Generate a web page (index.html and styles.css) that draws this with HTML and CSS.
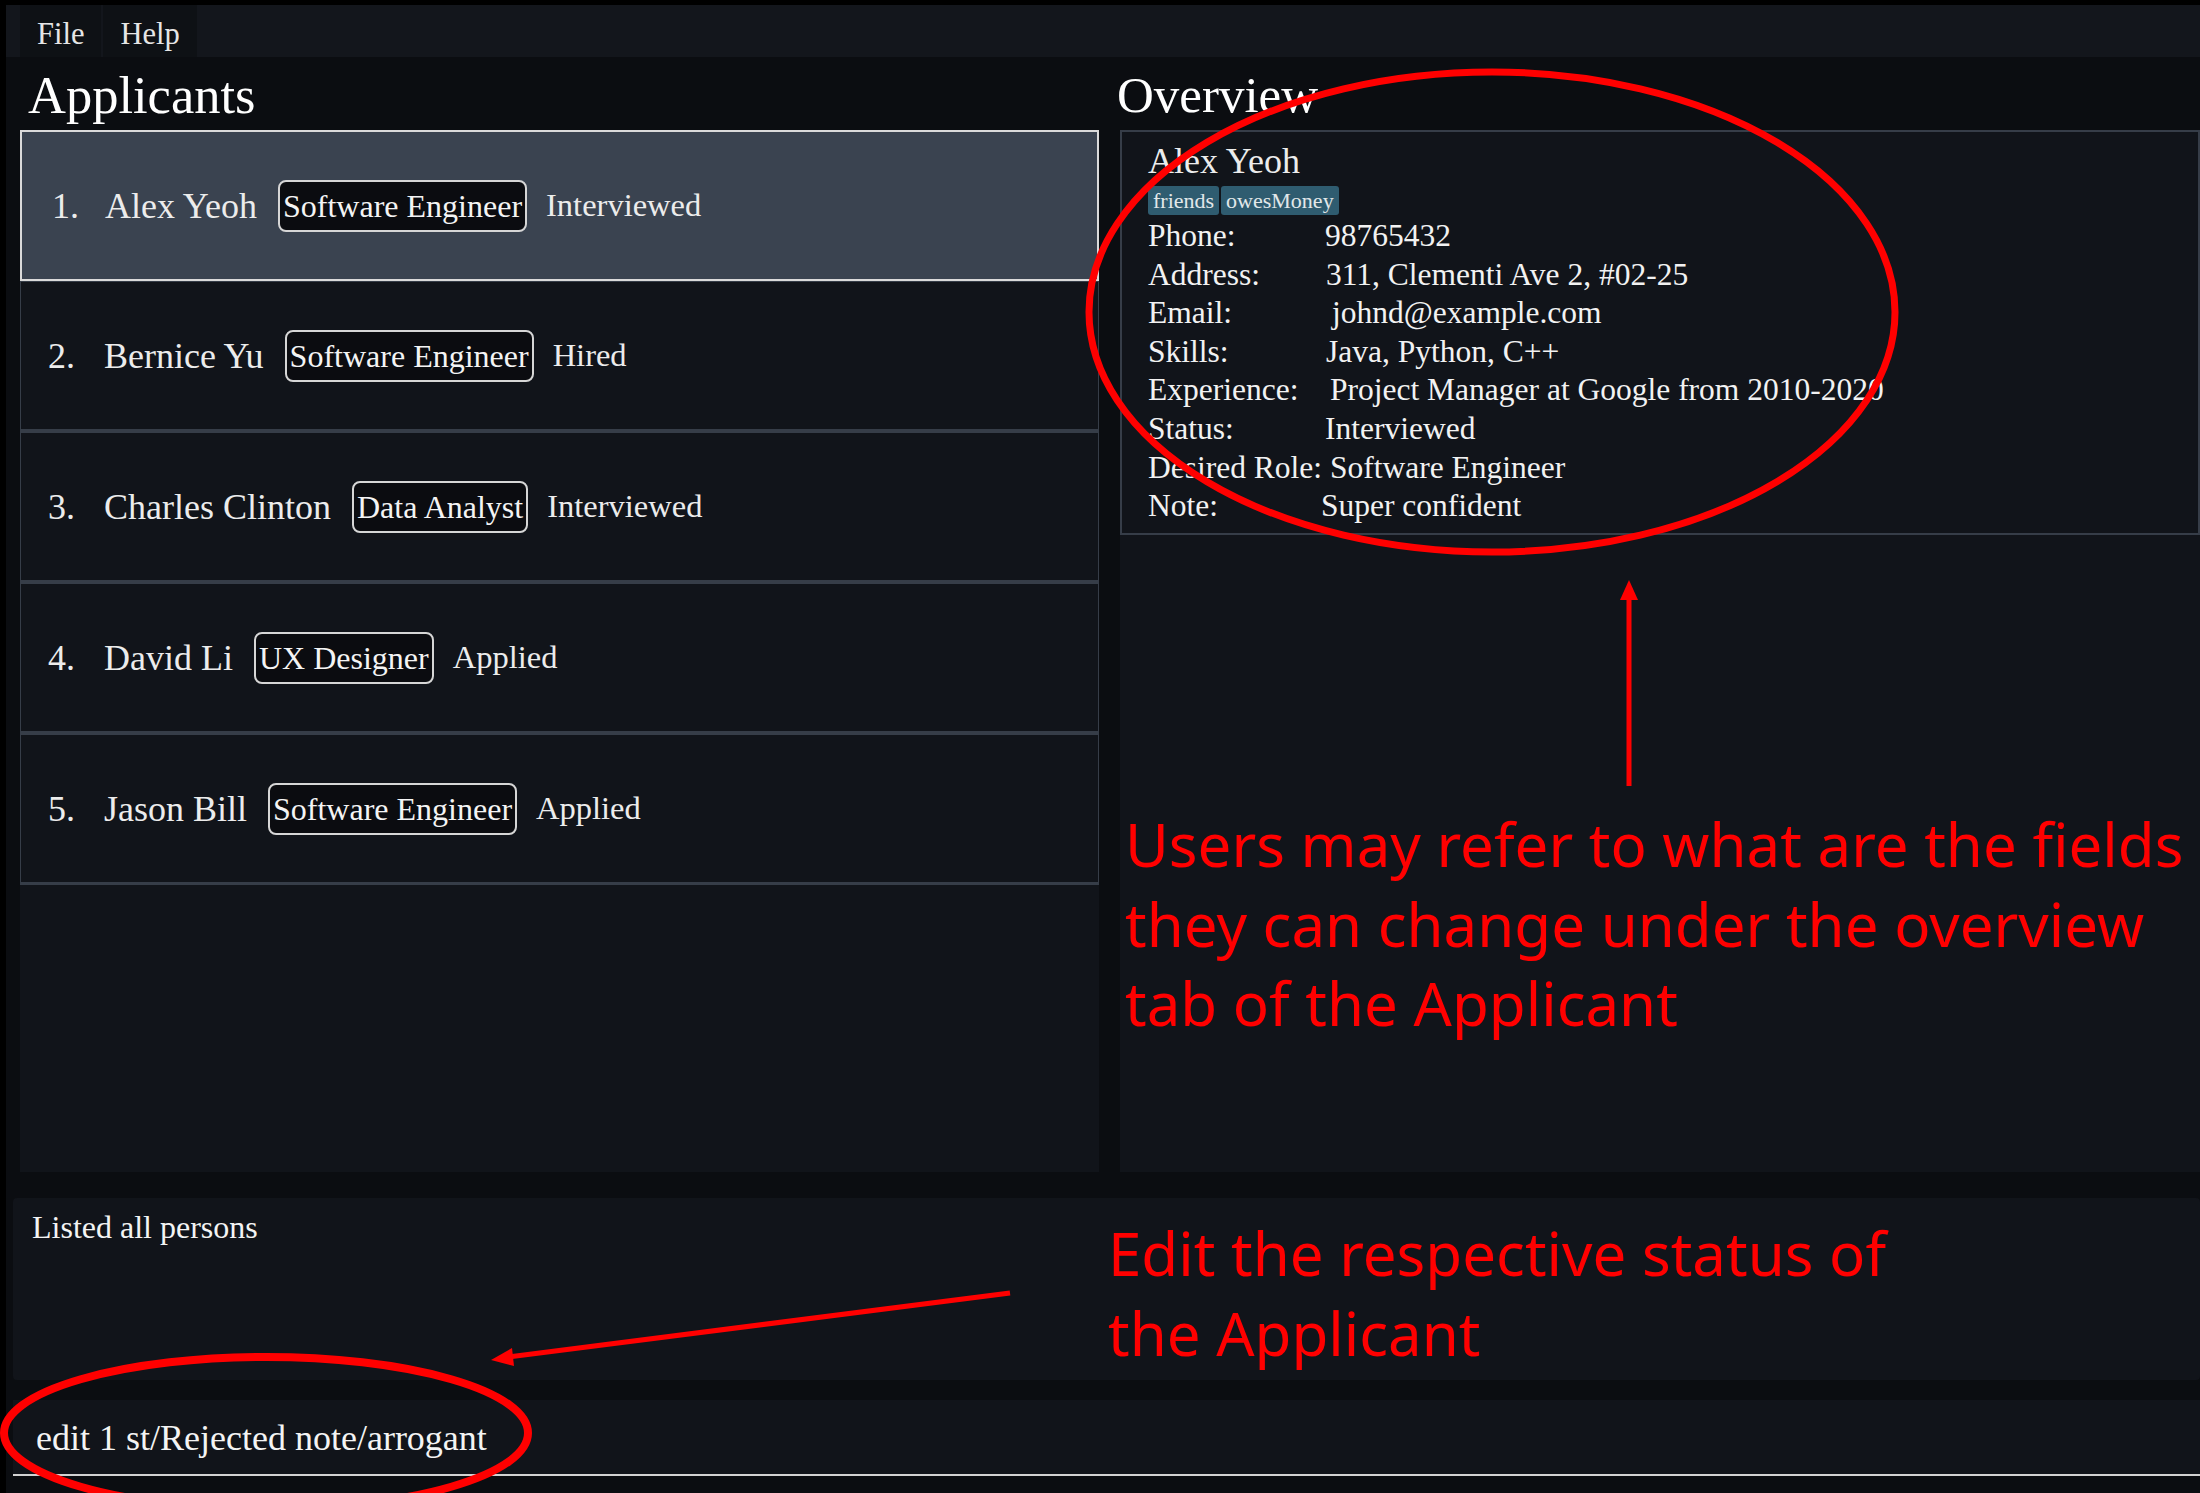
FILE: index.html
```html
<!DOCTYPE html>
<html lang="en">
<head>
<meta charset="utf-8">
<title>Applicants</title>
<link rel="stylesheet" href="styles.css">
</head>
<body>
<div class="app">
  <nav class="menubar">
    <span class="menu-item">File</span>
    <span class="menu-item">Help</span>
  </nav>
  <main class="main">
    <section class="col col-left">
      <h1 class="heading heading--applicants">Applicants</h1>
      <div class="list-panel">
        <div class="card card--selected">
          <span class="card-index">1.</span>
          <span class="card-name">Alex Yeoh</span>
          <span class="role-tag">Software Engineer</span>
          <span class="card-status">Interviewed</span>
        </div>
        <div class="card">
          <span class="card-index">2.</span>
          <span class="card-name">Bernice Yu</span>
          <span class="role-tag">Software Engineer</span>
          <span class="card-status">Hired</span>
        </div>
        <div class="card">
          <span class="card-index">3.</span>
          <span class="card-name">Charles Clinton</span>
          <span class="role-tag">Data Analyst</span>
          <span class="card-status">Interviewed</span>
        </div>
        <div class="card">
          <span class="card-index">4.</span>
          <span class="card-name">David Li</span>
          <span class="role-tag">UX Designer</span>
          <span class="card-status">Applied</span>
        </div>
        <div class="card">
          <span class="card-index">5.</span>
          <span class="card-name">Jason Bill</span>
          <span class="role-tag">Software Engineer</span>
          <span class="card-status">Applied</span>
        </div>
      </div>
    </section>
    <section class="col col-right">
      <h1 class="heading heading--overview">Overview</h1>
      <div class="detail-panel">
        <div class="detail-box">
          <div class="detail-name">Alex Yeoh</div>
          <div class="detail-tags">
            <span class="detail-tag">friends</span>
            <span class="detail-tag">owesMoney</span>
          </div>
          <div class="fields">
            <span class="label">Phone:</span><span class="value">98765432</span>
            <span class="label">Address:</span><span class="value value--s1">311, Clementi Ave 2, #02-25</span>
            <span class="label">Email:</span><span class="value value--s7">johnd@example.com</span>
            <span class="label">Skills:</span><span class="value value--s1">Java, Python, C++</span>
            <span class="label">Experience:</span><span class="value value--s5">Project Manager at Google from 2010-2020</span>
            <span class="label">Status:</span><span class="value">Interviewed</span>
            <span class="label">Desired Role:</span><span class="value value--s5">Software Engineer</span>
            <span class="label">Note:</span><span class="value value--n4">Super confident</span>
          </div>
        </div>
      </div>
    </section>
  </main>
  <div class="result">Listed all persons</div>
  <div class="command">edit 1 st/Rejected note/arrogant</div>
</div>

<svg class="annotation-layer" width="2200" height="1493" viewBox="0 0 2200 1493" xmlns="http://www.w3.org/2000/svg">
  <ellipse cx="1492" cy="312" rx="403" ry="240" fill="none" stroke="#ff0000" stroke-width="7"/>
  <line x1="1629" y1="786" x2="1629" y2="596" stroke="#ff0000" stroke-width="5"/>
  <polygon points="1629,580 1620,600 1638,600" fill="#ff0000"/>
  <line x1="1010" y1="1293" x2="508" y2="1357" stroke="#ff0000" stroke-width="5"/>
  <polygon points="491,1360 514,1366 512,1348" fill="#ff0000"/>
  <ellipse cx="266" cy="1433" rx="262" ry="76" fill="none" stroke="#ff0000" stroke-width="8"/>
</svg>
<div class="note note--overview">Users may refer to what are the fields<br>they can change under the overview<br>tab of the Applicant</div>
<div class="note note--status">Edit the respective status of<br>the Applicant</div>
</body>
</html>
```

FILE: styles.css
```css
html, body {
  margin: 0;
  padding: 0;
}

body {
  width: 2200px;
  height: 1493px;
  overflow: hidden;
  background: #000000;
  padding: 5px 0 0 6px;
  box-sizing: border-box;
  position: relative;
  font-family: "Liberation Serif", "Times New Roman", serif;
  color: #f0f0f0;
}

.app {
  width: 2194px;
  height: 1488px;
  background: #0b0d11;
  display: flex;
  flex-direction: column;
}

/* Menu bar */
.menubar {
  height: 52px;
  flex: none;
  background: #13161c;
  display: flex;
  gap: 2px;
  padding-left: 14px;
}

.menu-item {
  background: #0e1115;
  padding: 6px 17px 0;
  line-height: 46px;
  font-size: 30.5px;
  color: #e6e6e6;
}

/* Main area */
.main {
  height: 1115px;
  flex: none;
  display: flex;
  gap: 21px;
  padding-left: 14px;
}

.col {
  display: flex;
  flex-direction: column;
}

.col-left {
  width: 1079px;
}

.col-right {
  flex: 1;
}

.heading {
  margin: 8px 0 5px;
  font-size: 51px;
  line-height: 60px;
  font-weight: normal;
  color: #ffffff;
}

.heading--applicants {
  padding-left: 8px;
  font-size: 52.5px;
}

.heading--overview {
  margin-left: -3px;
}

/* Applicant list */
.list-panel {
  flex: 1;
  background: #11141a;
}

.card {
  height: 151px;
  box-sizing: border-box;
  border: 1px solid #363d48;
  border-bottom-width: 3px;
  display: flex;
  align-items: center;
  padding-left: 27px;
  font-size: 36px;
  color: #ececec;
}

.card--selected {
  background: #3a4350;
  border: 2px solid #dadada;
  padding-left: 30px;
}

.card-index {
  width: 56px;
  flex: none;
}

.card--selected .card-index {
  width: 53px;
}

.card-name {
  margin-right: 21px;
}

.role-tag {
  height: 52px;
  box-sizing: border-box;
  border: 2px solid #d6d6d6;
  border-radius: 8px;
  background: #0b0c10;
  padding: 0 3px;
  font-size: 32px;
  line-height: 48px;
  color: #f4f4f4;
  margin-right: 19px;
}

.card-status {
  font-size: 32.5px;
}

/* Overview */
.detail-panel {
  flex: 1;
  background: #11141a;
}

.detail-box {
  height: 405px;
  box-sizing: border-box;
  border: 2px solid #363d48;
  padding: 9px 0 0 26px;
}

.detail-name {
  font-size: 36px;
  line-height: 40px;
  color: #ececec;
}

.detail-tags {
  margin-top: 5px;
  display: flex;
  gap: 2px;
}

.detail-tag {
  background: #2f5c70;
  color: #e2e8ea;
  font-size: 22px;
  line-height: 29px;
  padding: 0 5px;
  border-radius: 3px;
}

.fields {
  margin-top: 2px;
  display: grid;
  grid-template-columns: 177px 1fr;
  font-size: 31.5px;
  line-height: 38.6px;
  color: #f2f2f2;
}

.value--s1 { margin-left: 1px; }
.value--s5 { margin-left: 5px; }
.value--s7 { margin-left: 7px; }
.value--n4 { margin-left: -4px; }

/* Result + command */
.result {
  margin: 26px 0 0 7px;
  height: 182px;
  box-sizing: border-box;
  background: #11141a;
  border-radius: 4px;
  padding: 9px 19px;
  font-size: 32px;
  line-height: 40px;
  color: #f4f4f4;
}

.command {
  margin: 20px 0 0 7px;
  height: 76px;
  box-sizing: border-box;
  background: #11141a;
  border-bottom: 2px solid #d2d2d2;
  padding: 18px 0 0 23px;
  font-size: 36px;
  line-height: 40px;
  color: #f4f4f4;
}

/* Annotation overlay */
.annotation-layer {
  position: absolute;
  left: 0;
  top: 0;
  pointer-events: none;
}

.note {
  position: absolute;
  font-family: "Noto Sans", "Open Sans", sans-serif;
  font-size: 60px;
  line-height: 79.5px;
  color: #ff0000;
  white-space: nowrap;
}

.note--overview {
  left: 1125px;
  top: 805px;
}

.note--status {
  left: 1108px;
  top: 1214px;
}
```
